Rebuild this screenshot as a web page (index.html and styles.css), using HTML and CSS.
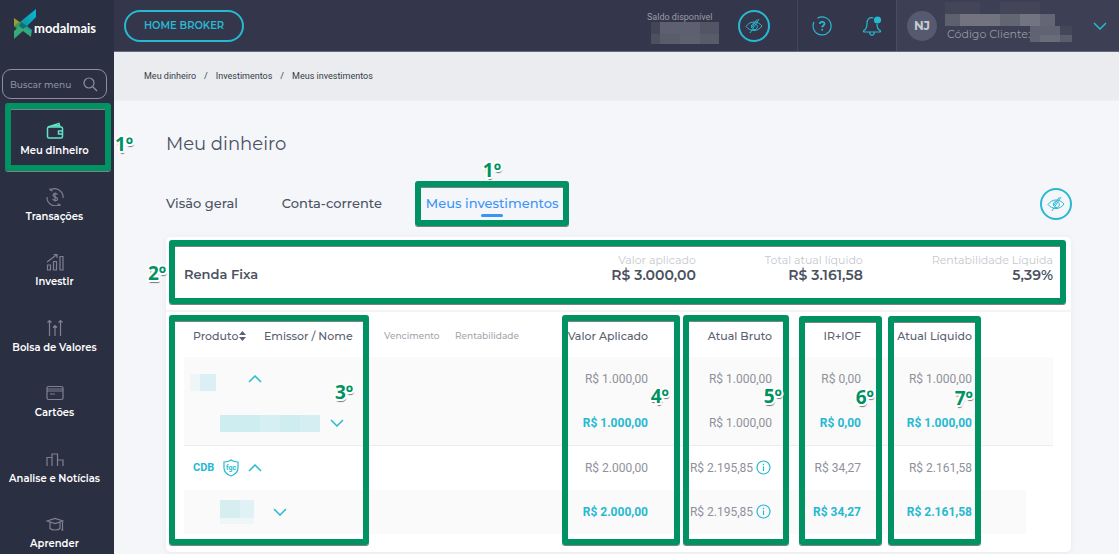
FILE: index.html
```html
<!DOCTYPE html>
<html lang="pt-BR">
<head>
<meta charset="utf-8">
<title>Meus investimentos - modalmais</title>
<meta name="viewport" content="width=device-width, initial-scale=1">
<link rel="stylesheet" href="styles.css">
</head>
<body>
<svg class="sprite" aria-hidden="true">
  <symbol id="eye-off" viewBox="0 0 18 16"><path d="M1 8.500C3 5.500 6 4 9 4s6 1.500 8 4c-2 3-5 4.500-8 4.500S3 11 1 8.500z"/><path d="M11.500 6.500a3 3 0 0 1-3.500 4.800M6.500 9.500a3 3 0 0 1 3-4M14 1 5 15M12 1.500 6.500 10"/></symbol>
  <symbol id="down" viewBox="0 0 14 8"><path d="M1 1l6 6 6-6"/></symbol>
  <symbol id="up" viewBox="0 0 14 8"><path d="M1 7l6-6 6 6"/></symbol>
  <symbol id="info" viewBox="0 0 15 15"><circle cx="7.500" cy="7.500" r="6.500"/><path d="M7.500 6.500V11M7.500 3.800v1.400"/></symbol>
</svg>
<div class="shell">
  <aside class="sidebar">
    <a class="logo" href="#">
      <svg class="logo-mark" viewBox="0 0 24 30" aria-hidden="true">
        <defs><linearGradient id="g1" x1="0" y1="1" x2="1" y2="0"><stop offset="0" stop-color="#178b7d"/><stop offset="1" stop-color="#04b8e0"/></linearGradient></defs>
        <path fill="url(#g1)" d="M23 0v8L14 17l5 4-1 6-10-8-1-6z"/>
        <path fill="#9a9d2f" d="M1 9l7 5v5l-7-2z"/>
        <path fill="#3c9a5c" d="M1 17l5-4 4 4-4 5z"/>
        <path fill="#35aa78" d="M1 22l7-6 10 6v6l-8-6-9 8z"/>
        <path fill="#146c78" d="M8 13l6 4-4 3-4-3z"/>
      </svg>
      <span class="logo-name">modalmais</span>
    </a>
    <label class="search">
      <input class="search-input" type="text" placeholder="Buscar menu" aria-label="Buscar menu">
      <svg class="search-icon" viewBox="0 0 15 15" aria-hidden="true"><circle cx="6" cy="6" r="5"/><path d="M10 10l4 4"/></svg>
    </label>
    <nav class="menu">
      <a class="menu-item menu-active" href="#">
        <svg class="menu-icon" viewBox="0 0 18 18"><rect x="1.500" y="5" width="15" height="11" rx="1.500"/><path d="M2 5l11-3.500 1 3.500M5 4l8-.5M16.500 9h-4v3h4"/></svg>
        Meu dinheiro
        <span class="frame frame-menu"></span><span class="mark mark-menu">1º</span>
      </a>
      <a class="menu-item" href="#">
        <svg class="menu-icon" viewBox="0 0 18 18"><path d="M4 2a8.500 8.500 0 0 1 13 8M4 2v-1.500M4 2l2.500 1M14 16.500A8.500 8.500 0 0 1 1 9M14 16.500v1.500M14 16.500l-2.500-.5M11.500 6.500C11 5.500 7 5 7 7.300S11.500 8.500 11.500 11 7.500 12.500 6.500 11M9 4.500v9"/></svg>
        Transações</a>
      <a class="menu-item" href="#">
        <svg class="menu-icon" viewBox="0 0 18 18"><path d="M1.500 12h3v5h-3zM7.500 8.500h3V17h-3zM14 3.500h3V17h-3zM1 9l10-7.500M7.500 1.500H11V5"/></svg>
        Investir</a>
      <a class="menu-item" href="#">
        <svg class="menu-icon" viewBox="0 0 18 18"><path d="M3.500 17V2M1.500 3.500l2-2 2 2M9 17V7M7 8.500l2-2 2 2M14.500 17V2M12.500 3.500l2-2 2 2"/></svg>
        Bolsa de Valores</a>
      <a class="menu-item" href="#">
        <svg class="menu-icon" viewBox="0 0 18 18"><rect x="1" y="2.500" width="16" height="13" rx="1.500"/><path d="M1 5h16M1 7h16M4 10h5"/></svg>
        Cartões</a>
      <a class="menu-item" href="#">
        <svg class="menu-icon" viewBox="0 0 18 18"><path d="M1 16V7.500h5V16M6 7.500V4h5.500v12M11.500 10H17v6"/></svg>
        Analise e Notícias</a>
      <a class="menu-item" href="#">
        <svg class="menu-icon" viewBox="0 0 18 18"><path d="M1 6l8-2.500L17 6 9 8.500zM4 7v6.500c2 2 8 2 10 0V7M16.500 6v9M15 15h2.500"/></svg>
        Aprender</a>
    </nav>
  </aside>

  <div class="page">
    <header class="topbar">
      <button class="broker" type="button">HOME BROKER</button>
      <div class="balance">
        <span>Saldo disponível</span>
        <svg class="balance-mask" viewBox="0 0 68 22" aria-hidden="true"><path fill="#444658" d="M0 0h9v12H0z"/><path fill="#5e606f" d="M9 0h40v12H9z"/><path fill="#535565" d="M49 0h19v12H49z"/><path fill="#4e5061" d="M0 12h9v10H0z"/><path fill="#5a5c6b" d="M9 12h20v10H9z"/><path fill="#5f6170" d="M29 12h20v10H29z"/><path fill="#595b6b" d="M49 12h19v10H49z"/></svg>
      </div>
      <button class="round-btn" type="button" aria-label="Ocultar saldo"><svg class="eye"><use href="#eye-off"/></svg></button>
      <div class="tools">
        <button class="tool" type="button" aria-label="Ajuda"><svg class="tool-icon" viewBox="0 0 20 20"><path d="M5.500 2.200A9 9 0 1 1 2 6"/><path d="M7.800 8c0-3 4.700-2.800 4.700-.3 0 1.800-2.300 1.800-2.300 3.800M10.200 13v1.500" stroke-width="1.700"/></svg></button>
        <button class="tool" type="button" aria-label="Notificações"><svg class="tool-icon" viewBox="0 0 20 20"><path d="M11.500 2C7 .500 5 4 5 7c0 4.500-.5 6-3 7.500-1 .7-.5 1.500.5 1.500h15c1 0 1.500-.8.500-1.500-2-1-3-3-3-6.500M7.500 16.500c.5 3.500 4.500 3.500 5 0"/><circle class="dot" cx="15.500" cy="4" r="3"/></svg></button>
      </div>
      <div class="user">
        <span class="avatar">NJ</span>
        <div class="user-info">
          <svg class="name-mask" viewBox="0 0 110 24" aria-hidden="true"><path fill="#444559" d="M0 0h35v12H0zM55 0h40v12H55z"/><path fill="#5f606f" d="M0 12h15v12H0z"/><path fill="#72737f" d="M15 12h40v12H15z"/><path fill="#646573" d="M55 12h20v12H55z"/><path fill="#737481" d="M75 12h20v12H75z"/><path fill="#656675" d="M95 12h15v12H95z"/></svg>
          <div class="code">Código Cliente:<svg class="code-mask" viewBox="0 0 42 16" aria-hidden="true"><path fill="#626372" d="M0 0h10v16H0zM10 0h20v9H10z"/><path fill="#45465a" d="M30 0h12v9H30z"/><path fill="#6b6c79" d="M10 9h20v7H10z"/><path fill="#5b5c6c" d="M30 9h12v7H30z"/></svg></div>
        </div>
        <button class="tool user-toggle" type="button" aria-label="Abrir conta"><svg class="chevron"><use href="#down"/></svg></button>
      </div>
    </header>

    <nav class="crumbs" aria-label="Caminho"><a href="#">Meu dinheiro</a><span>/</span><a href="#">Investimentos</a><span>/</span><a href="#">Meus investimentos</a></nav>

    <main class="content">
      <h1 class="title">Meu dinheiro</h1>
      <div class="tabs">
        <a class="tab" href="#">Visão geral</a>
        <a class="tab" href="#">Conta-corrente</a>
        <a class="tab tab-active" href="#">Meus investimentos<span class="frame frame-tab"></span><span class="mark mark-tab">1º</span></a>
        <button class="round-btn tabs-eye" type="button" aria-label="Ocultar valores"><svg class="eye"><use href="#eye-off"/></svg></button>
      </div>

      <section class="card">
        <div class="summary">
          <h2 class="summary-title">Renda Fixa</h2>
          <dl class="figures">
            <div><dt>Valor aplicado</dt><dd>R$ 3.000,00</dd></div>
            <div><dt>Total atual líquido</dt><dd>R$ 3.161,58</dd></div>
            <div><dt>Rentabilidade Líquida</dt><dd>5,39%</dd></div>
          </dl>
          <span class="frame frame-summary"></span><span class="mark mark-summary">2º</span>
        </div>
        <div class="table-wrap">
          <table class="assets">
            <colgroup><col class="c-product"><col class="c-issuer"><col class="c-due"><col><col class="c-applied"><col class="c-gross"><col class="c-tax"><col class="c-net"><col class="c-gap"><col class="c-end"></colgroup>
            <thead>
              <tr>
                <th class="first">Produto<svg class="sort" viewBox="0 0 7 10"><path d="M0 4l3.500-4L7 4zM0 6h7l-3.500 4z"/></svg><span class="frame frame-product"></span><span class="mark mark-product">3º</span></th>
                <th>Emissor / Nome</th>
                <th class="minor">Vencimento</th>
                <th class="minor">Rentabilidade</th>
                <th class="num">Valor Aplicado<span class="frame frame-applied"></span><span class="mark mark-applied">4º</span></th>
                <th class="num">Atual Bruto<span class="frame frame-gross"></span><span class="mark mark-gross">5º</span></th>
                <th class="num">IR+IOF<span class="frame frame-tax"></span><span class="mark mark-tax">6º</span></th>
                <th class="num">Atual Líquido<span class="frame frame-net"></span><span class="mark mark-net">7º</span></th>
                <th></th><th></th>
              </tr>
            </thead>
            <tbody>
              <tr class="shade">
                <td class="name" colspan="2"><div class="line line-group"><svg class="mask-s" viewBox="0 0 26 24"><path fill="#eef6f9" d="M0 7h10v17H0z"/><path fill="#dceff4" d="M10 7h16v17H10z"/></svg><button class="tool" type="button" aria-label="Recolher"><svg class="chevron"><use href="#up"/></svg></button></div></td>
                <td></td><td></td><td class="num">R$ 1.000,00</td><td class="num">R$ 1.000,00</td><td class="num">R$ 0,00</td><td class="num">R$ 1.000,00</td><td></td><td></td>
              </tr>
              <tr class="shade ruled">
                <td class="name" colspan="2"><div class="line line-asset"><svg class="mask-l" viewBox="0 0 100 17"><path fill="#cdedf1" d="M0 0h40v17H0z"/><path fill="#d5eff3" d="M40 0h20v17H40z"/><path fill="#cfecf1" d="M60 0h20v17H60z"/><path fill="#d4eef2" d="M80 0h20v17H80z"/></svg><button class="tool" type="button" aria-label="Expandir"><svg class="chevron"><use href="#down"/></svg></button></div></td>
                <td></td><td></td><td class="num strong">R$ 1.000,00</td><td class="num">R$ 1.000,00</td><td class="num strong">R$ 0,00</td><td class="num strong">R$ 1.000,00</td><td></td><td></td>
              </tr>
              <tr>
                <td class="name" colspan="2"><div class="line line-cdb"><a class="product" href="#">CDB</a><svg class="shield" viewBox="0 0 16 18"><path d="M8 1c2 1.500 4 2 7 2v6c0 4-3 6.500-7 8-4-1.500-7-4-7-8V3c3 0 5-.5 7-2z"/><text x="8" y="11" text-anchor="middle">fgc</text></svg><button class="tool" type="button" aria-label="Recolher"><svg class="chevron"><use href="#up"/></svg></button></div></td>
                <td></td><td></td><td class="num">R$ 2.000,00</td><td class="num">R$ 2.195,85<svg class="info"><use href="#info"/></svg></td><td class="num">R$ 34,27</td><td class="num">R$ 2.161,58</td><td></td><td></td>
              </tr>
              <tr class="shade last">
                <td class="name" colspan="2"><div class="line line-asset line-wide"><svg class="mask-m" viewBox="0 0 34 24"><path fill="#d7eef1" d="M0 0h20v18H0z"/><path fill="#e1f2f7" d="M20 0h14v18H20z"/><path fill="#eef7f8" d="M0 18h34v6H0z"/></svg><button class="tool" type="button" aria-label="Expandir"><svg class="chevron"><use href="#down"/></svg></button></div></td>
                <td></td><td></td><td class="num strong">R$ 2.000,00</td><td class="num">R$ 2.195,85<svg class="info"><use href="#info"/></svg></td><td class="num strong">R$ 34,27</td><td class="num strong">R$ 2.161,58</td><td></td><td></td>
              </tr>
            </tbody>
          </table>
        </div>
      </section>
    </main>
  </div>
</div>
</body>
</html>
```
FILE: styles.css
```css
* { box-sizing: border-box; }

:root {
  --cyan: #28b9d2;
  --green: #009262;
  --ink: #4b5262;
}

body {
  margin: 0;
  background: #f5f6fa;
  color: var(--ink);
  font-family: Montserrat, Inter, sans-serif;
  font-size: 12px;
}

a { color: inherit; text-decoration: none; }
button { margin: 0; padding: 0; border: 0; background: none; font: inherit; color: var(--cyan); cursor: pointer; }
svg { display: block; flex: none; fill: none; stroke: currentColor; stroke-width: 1.2; }
svg [fill] { stroke: none; }
.sprite { position: absolute; width: 0; height: 0; }

.shell { display: flex; height: 100vh; overflow: hidden; }

/* Sidebar */
.sidebar { flex: none; width: 114px; background: #2b2f42; color: #fff; }
.logo { display: flex; align-items: center; height: 52px; padding: 0 0 4px 13px; }
.logo-mark { width: 24px; height: 30px; }
.logo-name { margin: 8px 0 0 -3px; font: 700 13px/16px Lato, sans-serif; }
.search { display: flex; align-items: center; height: 30px; margin: 17px 7px 0 2px; padding: 0 8px 0 7px; border: 1px solid #8d909c; border-radius: 9px; color: #8d909c; }
.search-input { flex: 1; min-width: 0; padding: 0; border: 0; outline: 0; background: none; color: inherit; font: 500 9px Montserrat, Inter, sans-serif; }
.search-input::placeholder { color: #8d909c; opacity: 1; }
.search-icon { width: 15px; height: 15px; }
.menu { display: grid; grid-auto-rows: 1fr; min-height: 459px; margin-top: 8px; }
.menu-item { position: relative; display: flex; flex-direction: column; align-items: center; gap: 5px; padding: 15px 5px 0 0; font-size: 10px; line-height: 12px; font-weight: 600; white-space: nowrap; }
.menu-icon { width: 18px; height: 18px; color: #7d8190; }
.menu-active .menu-icon { color: #5fe3c4; stroke-width: 1.500; }

/* Top bar */
.page { flex: 1; min-width: 0; }
.topbar { display: flex; align-items: center; height: 52px; padding-left: 10px; background: #34374b; border-bottom: 1px solid #676879; }
.broker { height: 32px; padding: 0 18px; border: 2px solid var(--cyan); border-radius: 16px; font-size: 10px; font-weight: 600; }
.balance { display: flex; flex-direction: column; align-items: flex-end; width: 72px; margin-left: auto; padding-top: 4px; color: #9c9ca2; font: 9px/10px Roboto, sans-serif; }
.balance span { align-self: flex-start; }
.balance-mask { width: 68px; height: 22px; }
.round-btn { display: grid; place-items: center; width: 32px; height: 32px; border: 2px solid var(--cyan); border-radius: 50%; }
.topbar .round-btn { margin: 0 27px 0 19px; }
.eye { width: 18px; height: 16px; stroke-width: 1; }
.tools { display: flex; align-self: stretch; align-items: center; gap: 30px; padding: 0 14px; border-left: 1px solid #43465a; }
.tool-icon { width: 20px; height: 20px; }
.dot { fill: currentColor; }
.user { display: flex; align-self: stretch; align-items: center; width: 223px; padding: 0 12px 0 10px; border-left: 1px solid #4a4c61; background: #3d3f54; }
.avatar { display: grid; place-items: center; width: 30px; height: 30px; border-radius: 50%; background: #555a70; color: #c8cad3; font-size: 12px; font-weight: 700; }
.user-info { margin: 0 0 8px 8px; color: #999aa1; white-space: nowrap; }
.name-mask { width: 110px; height: 24px; }
.code { display: flex; align-items: center; height: 16px; padding-left: 2px; font-size: 11px; line-height: 16px; }
.code-mask { width: 42px; height: 16px; }
.user-toggle { margin-left: auto; }
.chevron { width: 14px; height: 8px; stroke-width: 1.500; }

.crumbs { display: flex; gap: 8px; padding: 17px 30px; border-bottom: 1px solid #f0f1f4; background: #ebecef; color: #353c46; font: 9px/14px Roboto, sans-serif; }

/* Content */
.content { padding: 31px 48px 0 52px; }
.title { margin: 0; font-size: 18px; line-height: 24px; font-weight: 400; }
.tabs { display: flex; align-items: flex-start; gap: 44px; height: 32px; margin: 32px 0 17px; font-size: 13px; line-height: 30px; font-weight: 500; }
.tab { position: relative; white-space: nowrap; }
.tab-active { color: #3b93f7; }
.tab-active::after { content: ""; position: absolute; bottom: 1px; left: 50%; width: 22px; height: 3px; margin-left: -11px; border-radius: 2px; background: #3b93f7; }
.tabs-eye { margin: 0 -1px 0 auto; }

.card { border-radius: 5px; background: #fff; box-shadow: 0 1px 6px #e6e8ef; }
.summary { position: relative; display: flex; align-items: center; justify-content: space-between; height: 75px; padding: 0 18px; border-bottom: 2px solid #f4f4f6; }
.summary-title { margin: 0; font-size: 13px; font-weight: 600; }
.figures { display: flex; gap: 69px; margin: 0 0 12px; text-align: right; white-space: nowrap; }
.figures dt { color: #c6c8cf; font-size: 11px; line-height: 14px; }
.figures dd { margin: 0; font-size: 14px; line-height: 16px; font-weight: 600; }

.table-wrap { padding: 0 18px 18px; }
.assets { width: 100%; table-layout: fixed; border-collapse: separate; border-spacing: 0; color: #8f919b; font: 12px/16px Roboto, sans-serif; }
.c-product { width: 70px; }
.c-issuer { width: 120px; }
.c-due { width: 71px; }
.c-applied { width: 106px; }
.c-gross { width: 124px; }
.c-tax { width: 89px; }
.c-net { width: 111px; }
.c-gap { width: 44px; }
.c-end { width: 27px; }
.assets th { position: relative; height: 45px; padding: 3px 10px 0; color: #5b6170; font: 500 11px/16px Montserrat, Inter, sans-serif; text-align: left; white-space: nowrap; }
.assets th.first { padding: 3px 0 0 9px; }
.assets th.minor { color: #a3a5ae; font-size: 9px; }
.assets td { height: 44px; padding: 0 10px; white-space: nowrap; }
.assets .num { padding-left: 0; text-align: right; }
.assets .name { padding: 0; }
.sort { display: inline-block; width: 7px; height: 10px; margin-left: 1px; vertical-align: -1px; fill: currentColor; stroke: none; }
.shade td { background: #fafafa; }
.ruled td { height: 45px; border-bottom: 1px solid #ededef; }
.last td:last-child { background: none; }
.strong { color: var(--cyan); font-weight: 700; }
.line { display: flex; align-items: center; color: var(--cyan); }
.line-group { gap: 32px; padding-left: 6px; }
.line-asset { gap: 10px; padding-left: 36px; }
.line-wide { gap: 19px; }
.line-cdb { gap: 9px; padding-left: 9px; }
.product { font-weight: 700; font-size: 11px; }
.mask-s { width: 26px; height: 24px; }
.mask-l { width: 100px; height: 17px; }
.mask-m { width: 34px; height: 24px; }
.shield { width: 16px; height: 18px; }
.shield text { fill: currentColor; stroke: none; font: 700 7px Roboto, sans-serif; }
.info { display: inline-block; width: 15px; height: 15px; margin: 0 1px 0 3px; vertical-align: -3px; color: var(--cyan); }

/* Step annotations over the interface */
.frame { position: absolute; z-index: 2; border: 6px solid var(--green); border-radius: 3px; box-shadow: 0 1px 0 #7a8580, inset 0 1px 0 #7a8580; pointer-events: none; }
.mark { position: absolute; z-index: 3; color: var(--green); font: 700 19px/20px "Open Sans", sans-serif; text-shadow: 1px 0 #fff, -1px 0 #fff, 0 1px #fff, 0 -1px #fff, 2px 1px #fff, -2px 1px #fff, 1px 2px #fff, -1px 2px #fff, 1px -2px #fff, -1px -2px #fff, 1px 3px 1px #777; }
.frame-menu { inset: -4px 3px 2px 5px; }
.mark-menu { top: 27px; left: 115px; }
.frame-tab { inset: -7px -11px -8px; }
.mark-tab { top: -28px; left: 57px; }
.frame-summary { inset: 3px 5px 6px 3px; }
.mark-summary { top: 26px; left: -18px; }
.frame-product { top: 3px; left: -15px; width: 200px; height: 230px; }
.mark-product { top: 70px; left: 151px; }
.frame-applied { top: 3px; right: -22px; left: 10px; height: 230px; }
.mark-applied { top: 74px; right: -11px; }
.frame-gross { top: 3px; right: -7px; left: 25px; height: 230px; }
.mark-gross { top: 74px; right: 0; }
.frame-tax { top: 4px; right: -11px; left: 17px; height: 229px; }
.mark-tax { top: 75px; right: -3px; }
.frame-net { top: 4px; right: 1px; left: 17px; height: 229px; }
.mark-net { top: 76px; right: 9px; }
```
